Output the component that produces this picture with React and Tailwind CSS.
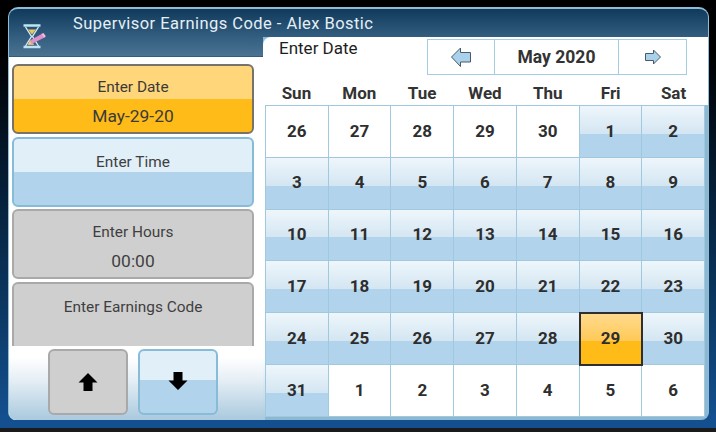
const weeks = [
  [[26,0],[27,0],[28,0],[29,0],[30,0],[1,1],[2,1]],
  [[3,1],[4,1],[5,1],[6,1],[7,1],[8,1],[9,1]],
  [[10,1],[11,1],[12,1],[13,1],[14,1],[15,1],[16,1]],
  [[17,1],[18,1],[19,1],[20,1],[21,1],[22,1],[23,1]],
  [[24,1],[25,1],[26,1],[27,1],[28,1],[29,2],[30,1]],
  [[31,1],[1,0],[2,0],[3,0],[4,0],[5,0],[6,0]],
];
const days = ["Sun","Mon","Tue","Wed","Thu","Fri","Sat"];

function Hourglass() {
  return (
    <svg width="26" height="26" viewBox="0 0 26 26">
      <path d="M1.5 1.5H18.5M1.5 23H18.5" stroke="#bfe3f4" strokeWidth="2.4" />
      <path d="M3.5 3 L9.5 12.5 L3.5 22 M16.5 3 L10.5 12.5 L16.5 22" fill="none" stroke="#d3eaf5" strokeWidth="1.4" />
      <path d="M6 5.5H14L10 10.5Z" fill="#f0c65a" />
      <path d="M5.5 21 L10 15.5 L12 21Z" fill="#d9b860" />
      <path d="M6 20.5 L8 16.5 L20.5 9.5 L23.5 13 L9.5 20Z" fill="#e08fc8" />
      <path d="M6 20.5 L8 16.5 L9.5 20Z" fill="#f0d070" />
      <path d="M19.5 10 L21.5 9 L23.8 12.2 L22 13.4Z" fill="#f3b8dd" />
    </svg>
  );
}

function SideButton({ label, value, kind }) {
  const skin = {
    amber: "border-[#77736a] bg-[linear-gradient(#ffd67a_0,#ffd67a_50%,#ffbc18_50%,#ffbc18_100%)] text-[#3a3a3a]",
    blue: "border-[#86bcd8] bg-[linear-gradient(#e0eff8_0,#e0eff8_50%,#b1d4ec_50%,#b1d4ec_100%)] text-[#3f3f3f]",
    gray: "border-[#a9a9a9] bg-[#cfcfcf] text-[#3f3f3f]",
  }[kind];
  return (
    <div className={`ml-[3px] flex h-[70px] w-[242px] shrink-0 flex-col items-center rounded-[6px] border-2 ${skin}`}>
      <div className={`${value ? "mt-[11px]" : "mt-[13px]"} h-[20px] text-[15.4px] leading-[20px]`}>{label}</div>
      {value && <div className="mt-[8px] text-[17.4px] leading-[22px]">{value}</div>}
    </div>
  );
}

function Cell({ n, kind }) {
  const skin = [
    "bg-white",
    "bg-[linear-gradient(#eef6fb_0,#d4e6f2_54%,#b1d4ec_55%,#b1d4ec_100%)]",
    "relative z-10 bg-[linear-gradient(#ffdb90_0,#ffc957_54%,#ffbc18_55%,#ffbc18_100%)] outline-2 -outline-offset-1 outline-[#2f2f2f]",
  ][kind];
  return (
    <div className={`flex items-center justify-center border-r border-b border-[#a0c9df] text-[17px] font-bold text-[#2e2e2e] ${skin}`}>
      {n}
    </div>
  );
}

export default function App() {
  return (
    <div className="flex h-[432px] w-[716px] flex-col overflow-hidden bg-[linear-gradient(#000_0,#000_12%,#06213b_46%,#0b3760_70%,#14508f_97%,#14508f_99%,#1a1a1a_99%)] font-['Roboto',sans-serif]">
      <div className="ml-[8px] mt-[7px] flex h-[413px] w-[701px] shrink-0 flex-col overflow-hidden rounded-t-[10px] rounded-b-[8px] border-t-2 border-l border-r border-[#8fbcd6] bg-[#8db8d2]">
        <div className="h-[28px] shrink-0 bg-[linear-gradient(#0f3a5c,#345e80)] pl-[64px] pt-[3px] text-[16.5px] leading-[24px] tracking-[0.45px] text-[#e6eff5]">
          Supervisor Earnings Code - Alex Bostic
        </div>
        <div className="flex min-h-0 flex-1">
          <div className="flex h-full w-[254px] shrink-0 flex-col bg-white">
            <div className="h-[20px] shrink-0 border-b border-[#2f5d7c] bg-[linear-gradient(#345e80,#4a7391)]">
              <div className="-mt-[13px] ml-[13px] w-[26px]"><Hourglass /></div>
            </div>
            <div className="flex h-[289px] shrink-0 flex-col gap-[2.5px] overflow-hidden pt-[7px]">
              <SideButton kind="amber" label="Enter Date" value="May-29-20" />
              <SideButton kind="blue" label="Enter Time" />
              <SideButton kind="gray" label="Enter Hours" value="00:00" />
              <SideButton kind="gray" label="Enter Earnings Code" />
            </div>
            <div className="flex flex-1 gap-[10px] bg-[linear-gradient(#fff_0,#fff_15%,#e6eff5_45%,#a9c9de_100%)] pl-[39px] pt-[3px]">
              <div className="flex h-[66px] w-[80px] items-center justify-center rounded-[6px] border-2 border-[#a9a9a9] bg-[#cfcfcf]">
                <svg width="20" height="20" viewBox="0 0 20 20"><path d="M10 1 L19.5 10.5 H14.5 V19 H5.5 V10.5 H.5Z" fill="#000" /></svg>
              </div>
              <div className="flex h-[66px] w-[80px] items-center justify-center rounded-[6px] border-2 border-[#86bcd8] bg-[linear-gradient(#e0eff8_0,#e0eff8_47%,#b1d4ec_47%,#b1d4ec_100%)]">
                <svg className="-mt-[3px]" width="20" height="20" viewBox="0 0 20 20"><path d="M10 19 L19.5 9.5 H14.5 V1 H5.5 V9.5 H.5Z" fill="#000" /></svg>
              </div>
            </div>
          </div>
          <div className="flex min-w-0 flex-1 flex-col">
            <div className="shrink-0 rounded-tl-[8px] bg-white pb-[1px]">
              <div className="flex h-[38px] items-start justify-between pl-[16px] pr-[21px] pt-[2px]">
                <div className="text-[17px] leading-[18px] text-[#1e1e1e]">Enter Date</div>
                <div className="flex h-[36px] w-[260px] border border-[#a5cde2]">
                  <div className="flex w-[67px] items-center justify-center border-r border-[#a5cde2]">
                    <svg width="20" height="20" viewBox="0 0 20 20"><path d="M.5 10 L9.5 1 V5.5 H19.5 V15 H9.5 V19.5Z" fill="#a9d1ec" stroke="#4a5a66" strokeWidth="1" /></svg>
                  </div>
                  <div className="flex flex-1 items-center justify-center border-r border-[#a5cde2] text-[17.5px] font-bold text-[#333]">May 2020</div>
                  <div className="flex w-[67px] items-center justify-center">
                    <svg width="16" height="16" viewBox="0 0 16 16"><path d="M15.5 8 L8.5 1 V4.5 H.5 V11.5 H8.5 V15Z" fill="#a9d1ec" stroke="#4a5a66" strokeWidth="1" /></svg>
                  </div>
                </div>
              </div>
              <div className="grid h-[29px] grid-cols-7 pl-[2px] pr-[3px] pt-[7px] text-center text-[17px] font-bold leading-[22px] text-[#333]">
                {days.map((d) => <div key={d}>{d}</div>)}
              </div>
            </div>
            <div className="flex min-h-0 flex-1">
              <div className="w-[2px] shrink-0 bg-[linear-gradient(#fff_0,#fff_80%,#a9c9de_100%)]" />
              <div className="grid h-[312px] w-[440px] grid-cols-7 grid-rows-6 border-t border-l border-[#a0c9df]">
                {weeks.flat().map(([n, k], i) => <Cell key={i} n={n} kind={k} />)}
              </div>
            </div>
          </div>
        </div>
      </div>
    </div>
  );
}
